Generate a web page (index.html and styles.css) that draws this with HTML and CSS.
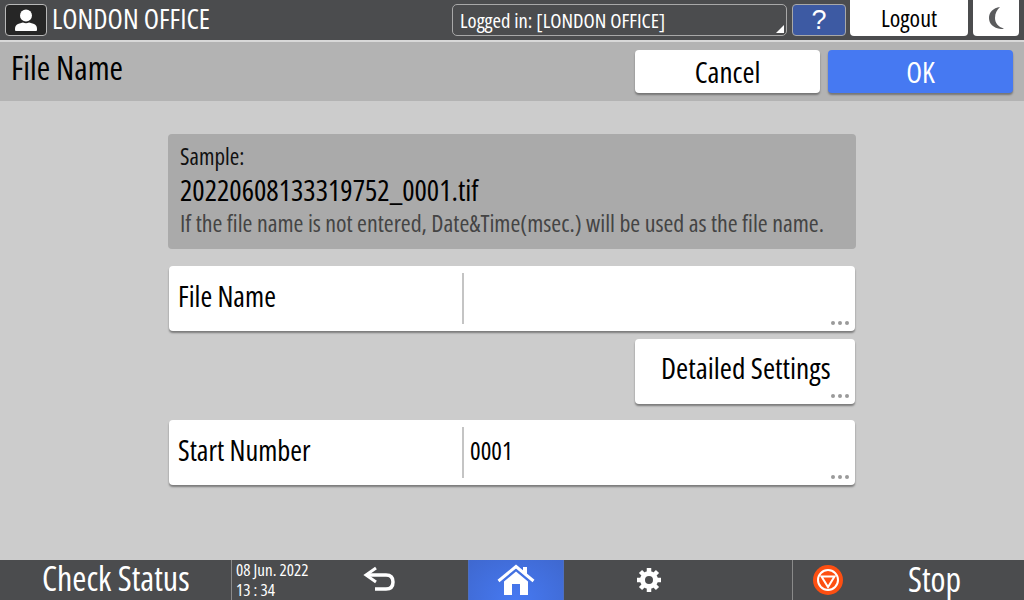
FILE: index.html
```html
<!DOCTYPE html>
<html lang="en">
<head>
<meta charset="utf-8">
<title>File Name</title>
<link rel="stylesheet" href="styles.css">
</head>
<body>
<div class="screen">
  <header class="topbar">
    <div class="user-icon">
      <svg width="30" height="24" viewBox="0 0 30 24"><circle cx="15" cy="7.500" r="6" fill="#fff"/><path d="M4 22c0-2 0-4 2-5.500 2-1.200 5-1.500 6-2 2 1 4 1 6 0 1 .5 4 .8 6 2 2 1.500 2 3.500 2 5.500 0 1-1 1-2 1H6c-1 0-2 0-2-1z" fill="#fff"/></svg>
    </div>
    <span class="t-office">LONDON OFFICE</span>
    <div class="spacer"></div>
    <div class="login-select"><span class="t-login">Logged in: [LONDON OFFICE]</span><i class="corner"></i></div>
    <div class="help"><span class="help-mark">?</span></div>
    <div class="logout">Logout</div>
    <div class="moon">
      <svg width="18" height="24" viewBox="0 0 18 24"><path d="M13 1C6 2 2 6.500 2 12s4 10 12 11c2 0 3-.5 3-.5C11 21 8 17 8 12s2-8 5-11z" fill="#5a5b5d"/></svg>
    </div>
  </header>
  <section class="titlebar">
    <h1 class="t-title">File Name</h1>
    <div class="spacer"></div>
    <button class="btn cancel">Cancel</button>
    <button class="btn ok">OK</button>
  </section>
  <main class="content">
    <div class="sample">
      <div class="t-sample">Sample:</div>
      <div class="t-sample-name">20220608133319752_0001.tif</div>
      <div class="t-sample-note">If the file name is not entered, Date&amp;Time(msec.) will be used as the file name.</div>
    </div>
    <div class="row first">
      <div class="row-label">File Name</div>
      <div class="row-value"></div>
      <i class="dots"></i>
    </div>
    <div class="detail">Detailed Settings<i class="dots"></i></div>
    <div class="row">
      <div class="row-label">Start Number</div>
      <div class="row-value">0001</div>
      <i class="dots"></i>
    </div>
  </main>
  <footer class="bottombar">
    <div class="check">Check Status</div>
    <div class="clock"><span>08 Jun. 2022</span><span>13 : 34</span></div>
    <div class="back">
      <svg width="36" height="28" viewBox="0 0 36 28"><path d="M14 2 4 9l10 7" fill="none" stroke="#fff" stroke-width="3"/><path d="M5 9h19c5 0 7 3 7 7s-2 7-7 7H13" fill="none" stroke="#fff" stroke-width="3.500"/></svg>
    </div>
    <div class="home">
      <svg width="38" height="32" viewBox="0 0 38 32"><path d="M1.500 17 19 2.500 36.500 17" fill="none" stroke="#fff" stroke-width="3"/><rect x="26" y="3" width="4" height="7" fill="#fff"/><path d="M7 17.500 19 7.500l12 10V31H23V20h-8v11H7z" fill="#fff"/></svg>
    </div>
    <div class="gear">
      <svg width="26" height="26" viewBox="0 0 26 26"><circle cx="13" cy="13" r="6.500" fill="none" stroke="#fff" stroke-width="5"/><g stroke="#fff" stroke-width="4.500"><path d="M13 1v5M13 20v5M1 13h5M20 13h5M4.500 4.500l3.500 3.500M18 18l3.500 3.500M21.500 4.500 18 8M8 18l-3.500 3.500"/></g></svg>
    </div>
    <div class="stop">
      <svg width="30" height="30" viewBox="0 0 30 30"><circle cx="15" cy="15" r="15" fill="#fd4f12"/><circle cx="15" cy="15" r="10" fill="none" stroke="#fff" stroke-width="2"/><path d="M8.500 11.500h13L15 22z" fill="none" stroke="#fff" stroke-width="2"/></svg>
      <span class="t-stop">Stop</span>
    </div>
  </footer>
</div>
</body>
</html>
```
FILE: styles.css
```css
* { box-sizing: border-box; }
html, body { margin: 0; padding: 0; }
body { width: 1024px; height: 600px; overflow: hidden; font-family: "Open Sans", "Noto Sans", sans-serif; font-stretch: 75%; font-weight: 370; line-height: 1; white-space: nowrap; }
.screen { width: 1024px; height: 600px; display: flex; flex-direction: column; background: #cccccc; }
.spacer { flex: 1; }

.topbar { height: 42px; background: #4b4c4e; border-bottom: 2px solid #d8d8d8; display: flex; align-items: flex-start; padding: 4px 0 0 5px; flex: none; }
.user-icon { width: 42px; height: 32px; background: #262626; border: 1px solid #b8b8b8; border-radius: 4px; display: flex; align-items: center; justify-content: center; }
.t-office { color: #fff; font-size: 28px; margin: 0 0 0 5px; }
.login-select { position: relative; width: 335px; height: 32px; border: 1px solid #a8a8a8; border-radius: 5px; padding: 5px 0 0 7px; }
.t-login { color: #fff; font-size: 20.600px; }
.corner { position: absolute; right: 2px; bottom: 2px; border-style: solid; border-width: 0 0 8px 8px; border-color: transparent transparent #fff transparent; }
.help { width: 54px; height: 32px; margin-left: 5px; background: #3d5aa3; border: 1px solid #a8a8a8; border-radius: 4px; display: flex; align-items: center; justify-content: center; }
.help-mark { color: #fff; font-size: 27px; font-family: "Liberation Sans", sans-serif; }
.logout { width: 118px; height: 36px; margin: -4px 0 0 4px; background: #fff; border-radius: 0 0 4px 4px; display: flex; align-items: center; justify-content: center; color: #000; font-size: 24px; }
.moon { width: 46px; height: 36px; margin: -4px 5px 0 5px; background: #fff; border-radius: 0 0 4px 4px; display: flex; align-items: center; justify-content: center; }

.titlebar { height: 59px; background: #b3b3b3; display: flex; align-items: flex-start; padding: 8px 11px 0 11px; flex: none; }
.t-title { color: #000; font-size: 32.500px; font-weight: inherit; margin: 2px 0 0 0; }
.btn { height: 43px; border: 0; border-radius: 4px; box-shadow: 0 2px 2px rgba(0,0,0,.35); padding: 0; font: inherit; font-size: 29px; display: flex; align-items: center; justify-content: center; }
.cancel { width: 185px; background: #fff; color: #000; margin-right: 8px; }
.ok { width: 185px; background: #4679f2; color: #fff; }

.content { flex: 1; width: 688px; margin: 0 auto; padding-top: 33px; display: flex; flex-direction: column; }
.sample { height: 115px; background: #aaaaaa; border-radius: 4px; padding: 11px 0 0 12px; display: flex; flex-direction: column; }
.t-sample { color: #111; font-size: 23px; height: 30px; flex: none; }
.t-sample-name { color: #000; font-size: 29px; height: 35px; flex: none; }
.t-sample-note { color: #444; font-size: 23.900px; margin-top: 1px; }
.row { position: relative; height: 65px; margin: 16px 1px 0 1px; background: #fff; border-radius: 4px; box-shadow: 0 2px 2px rgba(0,0,0,.4); display: flex; align-items: center; font-size: 28.400px; color: #000; }
.row.first { margin-top: 17px; }
.row-label { width: 295px; height: 51px; padding: 0 0 4px 9px; border-right: 2px solid #c4c4c4; display: flex; align-items: center; }
.row-value { flex: 1; padding: 0 0 4px 6px; font-size: 25px; }
.detail { position: relative; align-self: flex-end; width: 220px; height: 65px; margin: 8px 1px 0 0; background: #fff; border-radius: 4px; box-shadow: 0 2px 2px rgba(0,0,0,.4); display: flex; align-items: center; padding: 0 0 6px 26px; font-size: 29.400px; color: #000; }
.dots { position: absolute; right: 6px; bottom: 6px; width: 4px; height: 4px; border-radius: 50%; background: #9a9a9a; box-shadow: -7px 0 0 #9a9a9a, -14px 0 0 #9a9a9a; }

.bottombar { height: 40px; background: #4b4c4e; display: flex; align-items: stretch; flex: none; color: #fff; }
.check { width: 232px; border-right: 1px solid #8a8a8a; padding: 1px 0 0 42px; font-size: 34px; }
.clock { width: 100px; display: flex; flex-direction: column; gap: 3px; padding: 1px 0 0 4px; font-size: 17px; }
.back { width: 136px; display: flex; align-items: center; padding-left: 30px; }
.home { width: 96px; background: radial-gradient(ellipse at center bottom, #4679f2, #3f68cf); border-left: 1px solid #4d6fc0; border-right: 1px solid #4d6fc0; display: flex; align-items: center; justify-content: center; }
.gear { width: 228px; display: flex; align-items: center; padding-left: 72px; }
.stop { flex: 1; border-left: 1px solid #8a8a8a; display: flex; align-items: center; padding-left: 20px; }
.t-stop { font-size: 34px; margin: -3px 0 0 65px; }
```
